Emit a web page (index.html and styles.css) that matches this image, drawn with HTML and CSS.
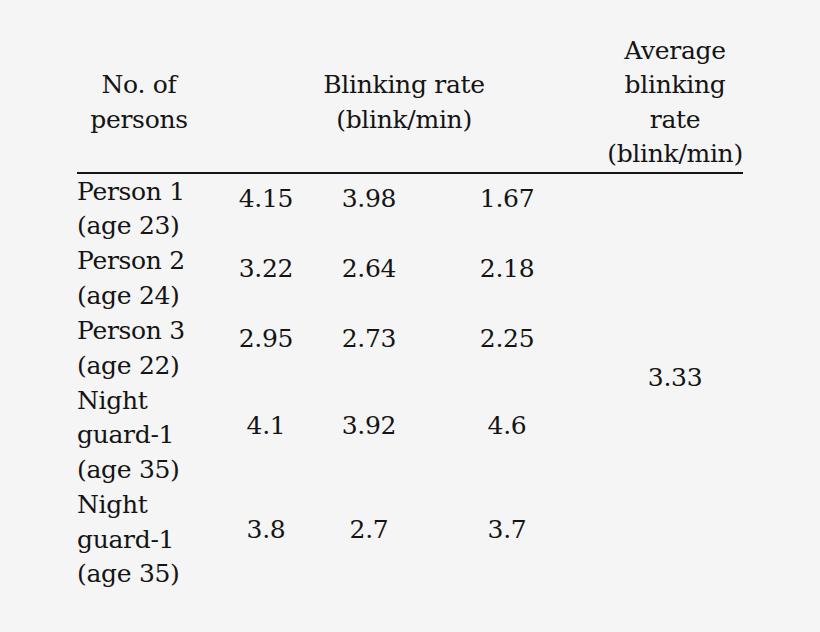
FILE: index.html
```html
<!DOCTYPE html>
<html lang="en">
<head>
<meta charset="utf-8">
<title>Blinking rate</title>
<link rel="stylesheet" href="styles.css">
</head>
<body>
<table class="rates">
  <colgroup>
    <col class="c-name">
    <col class="c-v1">
    <col class="c-v2">
    <col class="c-v3">
    <col class="c-avg">
  </colgroup>
  <thead>
    <tr>
      <th class="head">No. of<br>persons</th>
      <th class="head" colspan="3">Blinking rate<br>(blink/min)</th>
      <th class="head">Average<br>blinking<br>rate<br>(blink/min)</th>
    </tr>
  </thead>
  <tbody>
    <tr>
      <td class="name">Person 1<br>(age 23)</td>
      <td class="val">4.15</td>
      <td class="val">3.98</td>
      <td class="val">1.67</td>
      <td class="val avg" rowspan="5">3.33</td>
    </tr>
    <tr>
      <td class="name">Person 2<br>(age 24)</td>
      <td class="val">3.22</td>
      <td class="val">2.64</td>
      <td class="val">2.18</td>
    </tr>
    <tr>
      <td class="name">Person 3<br>(age 22)</td>
      <td class="val">2.95</td>
      <td class="val">2.73</td>
      <td class="val">2.25</td>
    </tr>
    <tr>
      <td class="name">Night<br>guard-1<br>(age 35)</td>
      <td class="val">4.1</td>
      <td class="val">3.92</td>
      <td class="val">4.6</td>
    </tr>
    <tr>
      <td class="name">Night<br>guard-1<br>(age 35)</td>
      <td class="val">3.8</td>
      <td class="val">2.7</td>
      <td class="val">3.7</td>
    </tr>
  </tbody>
</table>
</body>
</html>
```

FILE: styles.css
```css
html, body {
  margin: 0;
  padding: 0;
  background: #f5f5f5;
}

body {
  padding: 34px 0 0 77px;
  font-family: "DejaVu Serif", serif;
  font-size: 25px;
  letter-spacing: -0.3px;
  line-height: 34.4px;
  color: #141414;
}

.rates {
  border-collapse: separate;
  border-spacing: 0;
  table-layout: fixed;
  width: 666px;
  font: inherit;
}

.c-name { width: 124px; }
.c-v1 { width: 130px; }
.c-v2 { width: 76px; }
.c-v3 { width: 200px; }
.c-avg { width: 136px; }

.head {
  font-weight: normal;
  text-align: center;
  vertical-align: middle;
  padding: 0;
  border-bottom: 2px solid #141414;
}

.name {
  text-align: left;
  vertical-align: top;
  padding: 1px 0 0;
  white-space: nowrap;
}

.val {
  text-align: center;
  vertical-align: middle;
  padding: 0 0 18px;
}

.val.avg {
  padding: 0 0 8px;
}
```
